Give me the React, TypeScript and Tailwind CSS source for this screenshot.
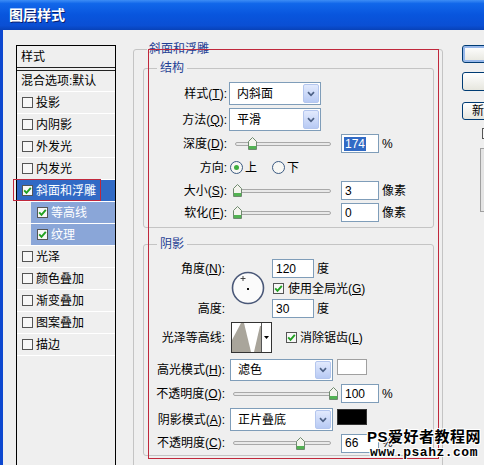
import React from 'react'

const UI = "font-['Liberation_Sans','Noto_Sans_CJK_SC',sans-serif]"

function Check({ checked = false }: { checked?: boolean }) {
  return (
    <span className="flex h-[11px] w-[11px] shrink-0 items-center justify-center border border-[#555] bg-[#f7f7f7]">
      {checked && (
        <svg width="9" height="9" viewBox="0 0 9 9">
          <path d="M1.2 4.4 L3.5 6.8 L7.8 1.8" fill="none" stroke="#21a121" strokeWidth="1.9" />
        </svg>
      )}
    </span>
  )
}

function Radio({ on = false }: { on?: boolean }) {
  return (
    <span className="flex h-[13px] w-[13px] shrink-0 items-center justify-center rounded-full border border-[#3b5a82] bg-[#f7f7f4]">
      {on && <span className="h-[5px] w-[5px] rounded-full bg-[#3fae3f]" />}
    </span>
  )
}

function Thumb({ className }: { className: string }) {
  return (
    <svg className={className} width="9" height="13" viewBox="0 0 9 13">
      <path d="M0.5 4.5 L4.5 0.5 L8.5 4.5 V12.5 H0.5 Z" fill="#f4f4ee" stroke="#6f8a6f" />
      <rect x="1" y="9" width="7" height="3" fill="#52b352" />
    </svg>
  )
}

function Slider({ thumb, track }: { thumb: string; track: string }) {
  return (
    <div className="relative flex h-[19px] w-[104px] shrink-0 items-center">
      <div className={`h-[4px] rounded-full border border-[#a9a9a9] bg-[#e9e9e9] ${track}`} />
      <Thumb className={`absolute top-[3px] ${thumb}`} />
    </div>
  )
}

function Num({ value, selected = false, w = 'w-[38px]' }: { value: string; selected?: boolean; w?: string }) {
  return (
    <div className={`flex h-[19px] shrink-0 items-center border border-[#7f9db9] bg-white pl-[2px] ${w}`}>
      <span className={selected ? 'bg-[#316ac5] px-[1px] text-white' : 'px-[1px]'}>{value}</span>
    </div>
  )
}

function Select({ value, w, h }: { value: string; w: string; h: string }) {
  return (
    <div className={`flex shrink-0 border border-[#7f9db9] bg-white ${w} ${h}`}>
      <span className="flex flex-1 items-center pl-[7px]">{value}</span>
      <span className="m-[1px] flex w-[16px] items-center justify-center rounded-[2px] border border-[#b4c6ee] bg-[linear-gradient(to_bottom,#e2eafd,#b8caf4)]">
        <svg width="8" height="6" viewBox="0 0 8 6">
          <path d="M1 1.2 L4 4.3 L7 1.2" fill="none" stroke="#4d6185" strokeWidth="1.7" />
        </svg>
      </span>
    </div>
  )
}

function Item({
  label,
  checked = false,
  selected = false,
  sub = false
}: {
  label: string
  checked?: boolean
  selected?: boolean
  sub?: boolean
}) {
  if (sub) {
    return (
      <div className="flex h-[22px] shrink-0 border-b border-white pl-[14px]">
        <div className="flex flex-1 items-center gap-[3px] bg-[#8aa6d8] pl-[6px] text-white">
          <Check checked={checked} />
          <span>{label}</span>
        </div>
      </div>
    )
  }
  return (
    <div
      className={`relative flex h-[22px] shrink-0 items-center gap-[3px] border-b border-white pl-[5px] ${
        selected ? 'bg-[#316ac5] text-white' : ''
      }`}>
      <Check checked={checked} />
      <span>{label}</span>
      {selected && (
        <div className="absolute -left-[4px] -top-[1px] h-[22px] w-[88px] border border-[#c0283c]" />
      )}
    </div>
  )
}

const btn =
  'rounded-[3px] border border-[#003c74] bg-[linear-gradient(to_bottom,#ffffff,#e6e6de)]'

export default function App() {
  return (
    <div className={`relative flex h-[465px] w-[484px] flex-col overflow-hidden bg-[#efefef] text-[12px] leading-[14px] text-black ${UI}`}>
      <div className="flex h-[30px] shrink-0 items-center bg-[linear-gradient(to_bottom,#3d8df5_0%,#1167ea_12%,#0855dd_50%,#0a4fd4_85%,#0842b8_100%)] pl-[9px]">
        <span className="text-[14px] font-bold text-white [text-shadow:1px_1px_0_#0a1f6e]">图层样式</span>
      </div>

      <div className="flex flex-1 items-start border-l-[3px] border-[#0d48d0]">
        {/* style list */}
        <div className="ml-[13px] mt-[15px] flex h-[440px] w-[100px] shrink-0 flex-col border border-black">
          <div className="flex h-[21px] shrink-0 items-center pl-[4px]">样式</div>
          <div className="h-[4px] shrink-0 border-y border-[#222]" />
          <div className="flex h-[21px] shrink-0 items-center border-b border-white pl-[4px]">混合选项:默认</div>
          <Item label="投影" />
          <Item label="内阴影" />
          <Item label="外发光" />
          <Item label="内发光" />
          <Item label="斜面和浮雕" checked selected />
          <Item label="等高线" checked sub />
          <Item label="纹理" checked sub />
          <Item label="光泽" />
          <Item label="颜色叠加" />
          <Item label="渐变叠加" />
          <Item label="图案叠加" />
          <Item label="描边" />
        </div>

        {/* bevel & emboss */}
        <fieldset className="ml-[17px] mt-[12px] h-[440px] w-[310px] shrink-0 rounded-[3px] border border-[#c4c4c4]">
          <legend className="ml-[13px] px-[2px] text-[#1f3f95]">斜面和浮雕</legend>

          <fieldset className="ml-[9px] mr-[8px] mt-[5px] rounded-[3px] border border-[#c4c4c4] pb-[5px]">
            <legend className="ml-[13px] px-[3px] text-[#1f3f95]">结构</legend>
            <div className="mt-[7px] flex h-[23px] items-center">
              <span className="w-[83px] shrink-0 text-right">样式(<u>T</u>):</span>
              <div className="ml-[2px]">
                <Select value="内斜面" w="w-[92px]" h="h-[23px]" />
              </div>
            </div>
            <div className="mt-[3px] flex h-[23px] items-center">
              <span className="w-[83px] shrink-0 text-right">方法(<u>Q</u>):</span>
              <div className="ml-[2px]">
                <Select value="平滑" w="w-[92px]" h="h-[23px]" />
              </div>
            </div>
            <div className="mt-[3px] flex h-[19px] items-center">
              <span className="w-[83px] shrink-0 text-right">深度(<u>D</u>):</span>
              <div className="ml-[2px]">
                <Slider thumb="left-[19px]" track="ml-[6px] w-[96px]" />
              </div>
              <div className="ml-[8px]">
                <Num value="174" selected />
              </div>
              <span className="ml-[3px]">%</span>
            </div>
            <div className="mt-[5px] flex h-[19px] items-center">
              <span className="w-[83px] shrink-0 text-right">方向:</span>
              <span className="ml-[3px]">
                <Radio on />
              </span>
              <span className="ml-[2px]">上</span>
              <span className="ml-[15px]">
                <Radio />
              </span>
              <span className="ml-[2px]">下</span>
            </div>
            <div className="mt-[4px] flex h-[19px] items-center">
              <span className="w-[83px] shrink-0 text-right">大小(<u>S</u>):</span>
              <div className="ml-[2px]">
                <Slider thumb="left-[4px]" track="ml-[6px] w-[96px]" />
              </div>
              <div className="ml-[8px]">
                <Num value="3" />
              </div>
              <span className="ml-[3px]">像素</span>
            </div>
            <div className="mt-[3px] flex h-[19px] items-center">
              <span className="w-[83px] shrink-0 text-right">软化(<u>F</u>):</span>
              <div className="ml-[2px]">
                <Slider thumb="left-[4px]" track="ml-[6px] w-[96px]" />
              </div>
              <div className="ml-[8px]">
                <Num value="0" />
              </div>
              <span className="ml-[3px]">像素</span>
            </div>
          </fieldset>

          <fieldset className="ml-[9px] mr-[8px] mt-[9px] rounded-[3px] border border-[#c4c4c4] pb-[3px]">
            <legend className="ml-[13px] px-[3px] text-[#1f3f95]">阴影</legend>
            <div className="mt-[8px] flex h-[59px]">
              <div className="flex w-[81px] shrink-0 flex-col justify-between">
                <span className="flex h-[19px] items-center justify-end">角度(<u>N</u>):</span>
                <span className="flex h-[19px] items-center justify-end">高度:</span>
              </div>
              <svg className="ml-[6px] mt-[12px] shrink-0" width="34" height="34" viewBox="0 0 34 34">
                <circle cx="17" cy="17" r="15.5" fill="#fbfbfb" stroke="#4a5878" strokeWidth="1.6" />
                <path d="M12 5 V10 M9.5 7.5 H14.5" stroke="#333" strokeWidth="0.9" />
                <rect x="16" y="17" width="2" height="2" fill="#111" />
              </svg>
              <div className="ml-[7px] flex flex-col">
                <div className="flex h-[19px] items-center">
                  <Num value="120" w="w-[42px]" />
                  <span className="ml-[3px]">度</span>
                </div>
                <div className="ml-[1px] mt-[5px] flex h-[11px] items-center gap-[4px]">
                  <Check checked />
                  <span>使用全局光(<u>G</u>)</span>
                </div>
                <div className="mt-[5px] flex h-[19px] items-center">
                  <Num value="30" w="w-[42px]" />
                  <span className="ml-[3px]">度</span>
                </div>
              </div>
            </div>
            <div className="mt-[4px] flex h-[31px] items-center">
              <span className="w-[81px] shrink-0 text-right">光泽等高线:</span>
              <div className="ml-[6px] flex h-[31px] w-[41px] shrink-0 border border-[#333] bg-white">
                <svg width="29" height="29" viewBox="0 0 29 29">
                  <path d="M0 29 L0 17 L9 0 L12 0 L19 29 Z" fill="#a9a59b" />
                  <path d="M22 29 L28 3 L29 3 L29 29 Z" fill="#a9a59b" />
                </svg>
                <span className="flex flex-1 items-center justify-center border-l border-[#555]">
                  <svg width="5" height="3" viewBox="0 0 5 3">
                    <path d="M0 0 H5 L2.5 3 Z" fill="#000" />
                  </svg>
                </span>
              </div>
              <div className="ml-[14px] flex items-center gap-[3px]">
                <Check checked />
                <span>消除锯齿(<u>L</u>)</span>
              </div>
            </div>
            <div className="mt-[6px] flex h-[22px] items-center">
              <span className="w-[81px] shrink-0 text-right">高光模式(<u>H</u>):</span>
              <div className="ml-[5px]">
                <Select value="滤色" w="w-[103px]" h="h-[22px]" />
              </div>
              <div className="ml-[4px] h-[16px] w-[30px] self-start border border-[#a0a0a0] bg-white" />
            </div>
            <div className="mt-[3px] flex h-[19px] items-center">
              <span className="w-[81px] shrink-0 text-right">不透明度(<u>O</u>):</span>
              <div className="ml-[4px]">
                <Slider thumb="left-[100px]" track="ml-[4px] w-[98px]" />
              </div>
              <div className="ml-[8px]">
                <Num value="100" />
              </div>
              <span className="ml-[3px]">%</span>
            </div>
            <div className="mt-[5px] flex h-[23px] items-center">
              <span className="w-[81px] shrink-0 text-right">阴影模式(<u>A</u>):</span>
              <div className="ml-[5px]">
                <Select value="正片叠底" w="w-[103px]" h="h-[23px]" />
              </div>
              <div className="ml-[4px] mt-[1px] h-[16px] w-[30px] self-start border border-[#333] bg-black" />
            </div>
            <div className="mt-[3px] flex h-[18px] items-center">
              <span className="w-[81px] shrink-0 text-right">不透明度(<u>C</u>):</span>
              <div className="ml-[4px]">
                <Slider thumb="left-[67px]" track="ml-[4px] w-[98px]" />
              </div>
              <div className="ml-[8px]">
                <Num value="66" />
              </div>
              <span className="ml-[3px]">%</span>
            </div>
          </fieldset>
        </fieldset>

        {/* buttons */}
        <div className="ml-[19px] mt-[15px] flex w-[90px] shrink-0 flex-col">
          <div className={`h-[18px] ${btn} shadow-[inset_0_0_0_2px_#98b8ea]`} />
          <div className={`mt-[9px] h-[19px] ${btn}`} />
          <div className={`mt-[11px] flex h-[18px] items-center whitespace-nowrap pl-[9px] ${btn}`}>新建样式(<u>W</u>)...</div>
          <div className="ml-[20px] mt-[8px]">
            <Check />
          </div>
          <div className="ml-[18px] mt-[9px] h-[64px] w-[60px] border border-[#a0a0a0] bg-[#e4e4e4]" />
        </div>
      </div>

      {/* annotation overlays */}
      <div className="absolute left-[148px] top-[49px] h-[410px] w-[291px] border border-[#c0283c]" />
      <div className="absolute left-[372px] top-[429px] flex w-[104px] flex-col items-center whitespace-nowrap [text-shadow:1px_1px_0_#fff,-1px_-1px_0_#fff,1px_-1px_0_#fff,-1px_1px_0_#fff]">
        <span className="text-[15px] font-bold leading-[16px] tracking-[0.5px]">PS爱好者教程网</span>
        <span className="font-mono text-[13px] font-bold leading-[15px] tracking-[0.5px]">www.psahz.com</span>
      </div>
    </div>
  )
}
